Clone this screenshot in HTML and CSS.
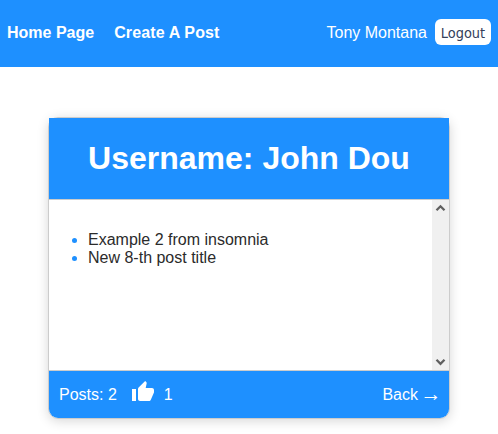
FILE: index.html
```html
<!DOCTYPE html>
<html lang="en">
<head>
<meta charset="utf-8">
<title>Profile</title>
<link rel="stylesheet" href="styles.css">
</head>
<body>
<header class="nav">
  <nav class="links"><a>Home Page</a><a class="create">Create A Post</a></nav>
  <div class="user"><span>Tony Montana</span><button class="logout">Logout</button></div>
</header>
<main class="card">
  <h1 class="title">Username: John Dou</h1>
  <div class="body">
    <ul class="posts"><li>Example 2 from insomnia</li><li>New 8-th post title</li></ul>
    <div class="scrollbar">
      <svg width="17" height="17" viewBox="0 0 17 17"><path d="M4.500 10.300 8.500 6.300l4 4"/></svg>
      <svg width="17" height="17" viewBox="0 0 17 17"><path d="M4.500 6.800l4 4 4-4"/></svg>
    </div>
  </div>
  <footer class="footer">
    <span>Posts: 2</span>
    <svg class="thumb" width="24" height="24" viewBox="0 0 24 24"><path d="M1 21h4V9H1v12zm22-11c0-1.100-.9-2-2-2h-6.310l.95-4.570.03-.32c0-.41-.17-.79-.44-1.060L14.170 1 7.590 7.590C7.220 7.950 7 8.450 7 9v10c0 1.100.9 2 2 2h9c.83 0 1.540-.5 1.840-1.220l3.020-7.050c.09-.23.14-.47.14-.73v-2z"/></svg>
    <span>1</span>
    <a class="back">Back <span class="arrow">→</span></a>
  </footer>
</main>
</body>
</html>
```
FILE: styles.css
```css
* { box-sizing: border-box; }
body { margin: 0; min-height: 100vh; background: #fff; font: 16px/18px "Liberation Sans", Arial, sans-serif; color: #2b2b2b; }
.nav { height: 67px; padding: 0 7px 2px; background: #1e90ff; color: #fff; display: flex; align-items: center; justify-content: space-between; }
.links { display: flex; gap: 20px; font-weight: bold; }
.create { letter-spacing: .13px; }
.user { display: flex; align-items: center; gap: 8px; }
.logout { height: 26px; width: 56px; margin-top: -1px; padding: 1px 0 0; border: 0; border-radius: 6px; background: #fff; color: #34405a; font: 14.4px "DejaVu Sans Condensed", "DejaVu Sans", sans-serif; }
.card { width: 402px; height: 302px; margin: 50px 0 0 48px; border: 1px solid #ccc; border-radius: 10px; box-shadow: 0 2px 12px rgba(0,0,0,.16); display: flex; flex-direction: column; }
.title { margin: 0; height: 81px; line-height: 80px; background: #1e90ff; color: #fff; text-align: center; font-size: 32px; }
.body { height: 172px; display: flex; justify-content: space-between; border: solid #ccc; border-width: 1px 0; background: #fff; }
.posts { margin: 31px 0 0; padding-left: 39px; }
.posts li::marker { color: #1e90ff; }
.scrollbar { width: 17px; background: #f0f0f0; display: flex; flex-direction: column; justify-content: space-between; }
.scrollbar path { fill: none; stroke: #606060; stroke-width: 2.3; }
.footer { flex: 1; background: #1e90ff; color: #fff; display: flex; align-items: center; padding: 0 10px; border-radius: 0 0 9px 9px; }
.thumb { margin: 0 9px 5px 14px; fill: #fff; }
.back { margin-left: auto; display: flex; gap: 5px; }
.arrow { width: 16px; display: flex; justify-content: center; font-size: 21px; line-height: 15px; }
```
